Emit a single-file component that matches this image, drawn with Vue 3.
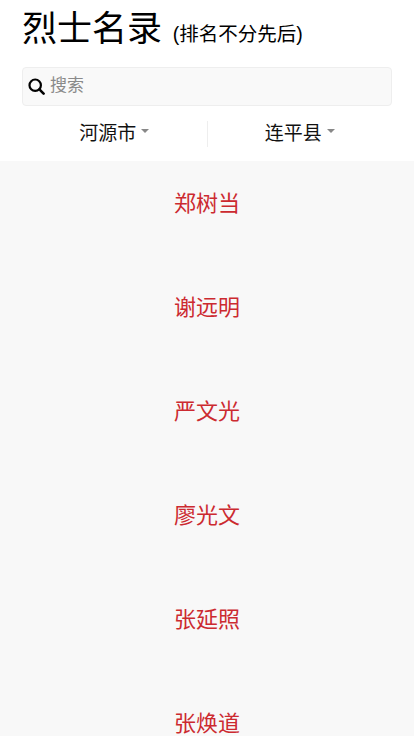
<script setup>
const names = ['郑树当', '谢远明', '严文光', '廖光文', '张延照', '张焕道']
const filters = ['河源市', '连平县']
</script>

<template>
  <div class="page">
    <header class="head">
      <h1 class="title">烈士名录 <small class="note">(排名不分先后)</small></h1>
      <label class="search">
        <svg class="icon" viewBox="0 0 17 17" width="17" height="17">
          <circle cx="7.2" cy="7.2" r="5.7" fill="none" stroke="#000" stroke-width="2.2" />
          <path d="M11.4 11.4 L15.6 15.6" stroke="#000" stroke-width="2.6" stroke-linecap="round" />
        </svg>
        <input class="input" type="text" placeholder="搜索" />
      </label>
      <div class="filters">
        <div v-for="f in filters" :key="f" class="filter">
          <span>{{ f }}</span><i class="caret"></i>
        </div>
      </div>
    </header>
    <ul class="list">
      <li v-for="n in names" :key="n" class="item">{{ n }}</li>
    </ul>
  </div>
</template>

<style>
html, body { margin: 0; padding: 0; }
</style>

<style scoped>
.page {
  height: 736px;
  overflow: hidden;
  background: #f8f8f8;
  font-family: "Liberation Sans", "Noto Sans CJK SC", sans-serif;
}
.head {
  background: #fff;
  padding: 8px 22px 0;
  height: 153px;
}
.title {
  margin: 0;
  height: 42px;
  font-size: 35px;
  line-height: 42px;
  font-weight: 400;
  color: #000;
}
.note {
  margin-left: 1px;
  font-size: 19.5px;
  line-height: 1;
  font-weight: 400;
}
.search {
  margin-top: 17px;
  height: 39px;
  box-sizing: border-box;
  display: flex;
  align-items: center;
  gap: 5px;
  padding-left: 5px;
  padding-bottom: 1px;
  background: #f9f9f9;
  border: 1px solid #eee;
  border-radius: 4px;
}
.icon { flex: none; margin-top: 1px; }
.input {
  flex: 1;
  min-width: 0;
  border: 0;
  outline: 0;
  padding: 0;
  background: transparent;
  font: inherit;
  font-size: 17px;
}
.input::placeholder { color: #8a8a8a; opacity: 1; }
.filters {
  display: flex;
  margin-top: 15px;
}
.filter {
  flex: 1;
  height: 26px;
  box-sizing: border-box;
  padding-bottom: 5px;
  display: flex;
  align-items: center;
  justify-content: center;
  gap: 5px;
  font-size: 19px;
  color: #111;
}
.filter + .filter { border-left: 1px solid #eee; }
.caret {
  width: 0;
  height: 0;
  border-left: 4px solid transparent;
  border-right: 4px solid transparent;
  border-top: 4px solid #888;
  margin-bottom: 2px;
}
.list {
  list-style: none;
  margin: 0;
  padding: 0;
}
.item {
  height: 104px;
  line-height: 86px;
  text-align: center;
  font-size: 22px;
  color: #cc2a30;
}
</style>
